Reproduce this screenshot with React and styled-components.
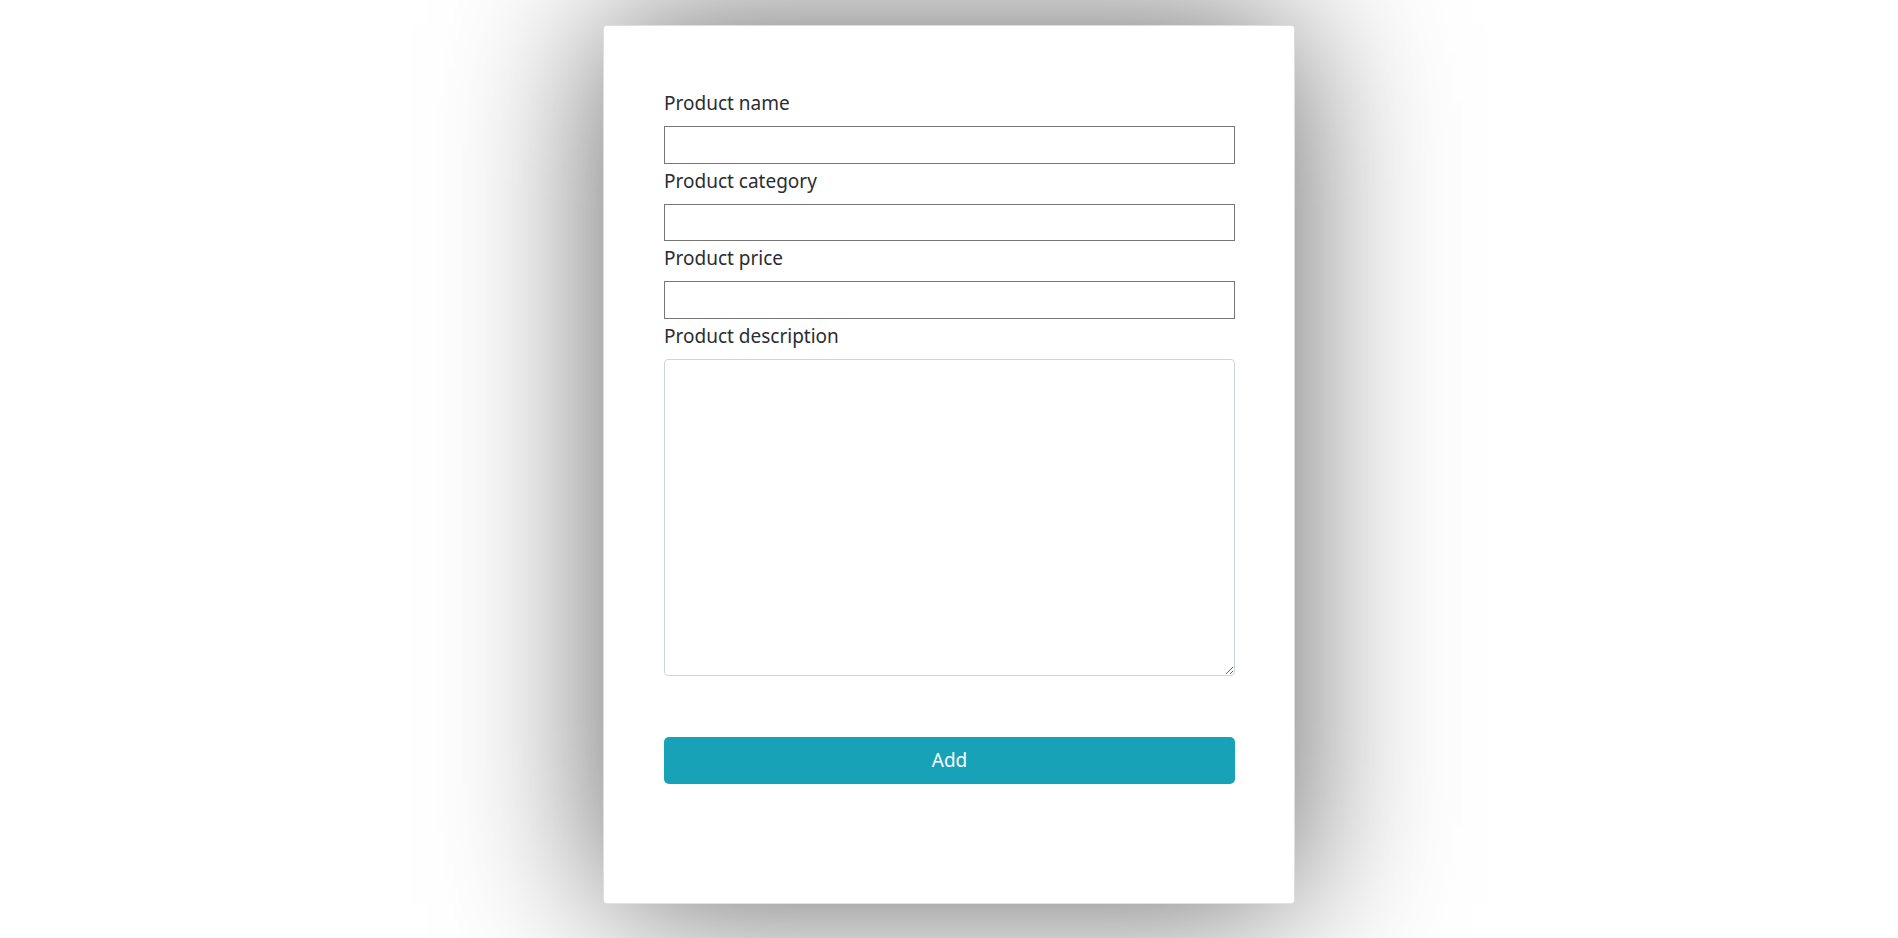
import React from "react";
import styled, { createGlobalStyle } from "styled-components";

const Global = createGlobalStyle`
  html, body { margin: 0; padding: 0; background: #fff; }
  body { font-family: "Segoe UI", "Noto Sans", "Open Sans", sans-serif; color: #212529; overflow: hidden; }
  * { box-sizing: border-box; }
`;

const Page = styled.div`
  width: 1898px;
  height: 938px;
  display: flex;
  justify-content: center;
  align-items: flex-start;
  padding-top: 25px;
`;

const Card = styled.form`
  width: 692px;
  height: 879px;
  background: #fff;
  border: 1px solid rgba(0, 0, 0, 0.125);
  border-radius: 4px;
  box-shadow: 0 0 160px rgba(0, 0, 0, 0.62);
  padding: 60px 59px 0 60px;
  display: flex;
  flex-direction: column;
`;

const Label = styled.label`
  display: block;
  font-size: 19px;
  line-height: 30px;
  padding-top: 2px;
  margin-bottom: 8px;
  color: #2a2d31;
`;

const Input = styled.input`
  display: block;
  width: 100%;
  height: 37.5px;
  border: 1px solid #767676;
  border-radius: 0;
  padding: 2px 8px;
  font-size: 16px;
  font-family: inherit;
  outline: none;
`;

const TextArea = styled.textarea`
  display: block;
  width: 100%;
  height: 317px;
  border: 1px solid #ced4da;
  border-radius: 4px;
  padding: 6px 12px;
  font-size: 16px;
  font-family: inherit;
  outline: none;
`;

const Button = styled.button`
  margin-top: 61px;
  width: 100%;
  height: 47px;
  border: none;
  border-radius: 5px;
  background: #17a2b8;
  color: #fff;
  font-family: inherit;
  font-size: 19px;
  cursor: pointer;
`;

const fields = [
  { id: "name", label: "Product name" },
  { id: "category", label: "Product category" },
  { id: "price", label: "Product price" },
];

export default function App() {
  return (
    <>
      <Global />
      <Page>
        <Card onSubmit={(e) => e.preventDefault()}>
          {fields.map((f) => (
            <div key={f.id}>
              <Label htmlFor={f.id}>{f.label}</Label>
              <Input id={f.id} type="text" />
            </div>
          ))}
          <div>
            <Label htmlFor="description">Product description</Label>
            <TextArea id="description" />
          </div>
          <Button type="submit">Add</Button>
        </Card>
      </Page>
    </>
  );
}
